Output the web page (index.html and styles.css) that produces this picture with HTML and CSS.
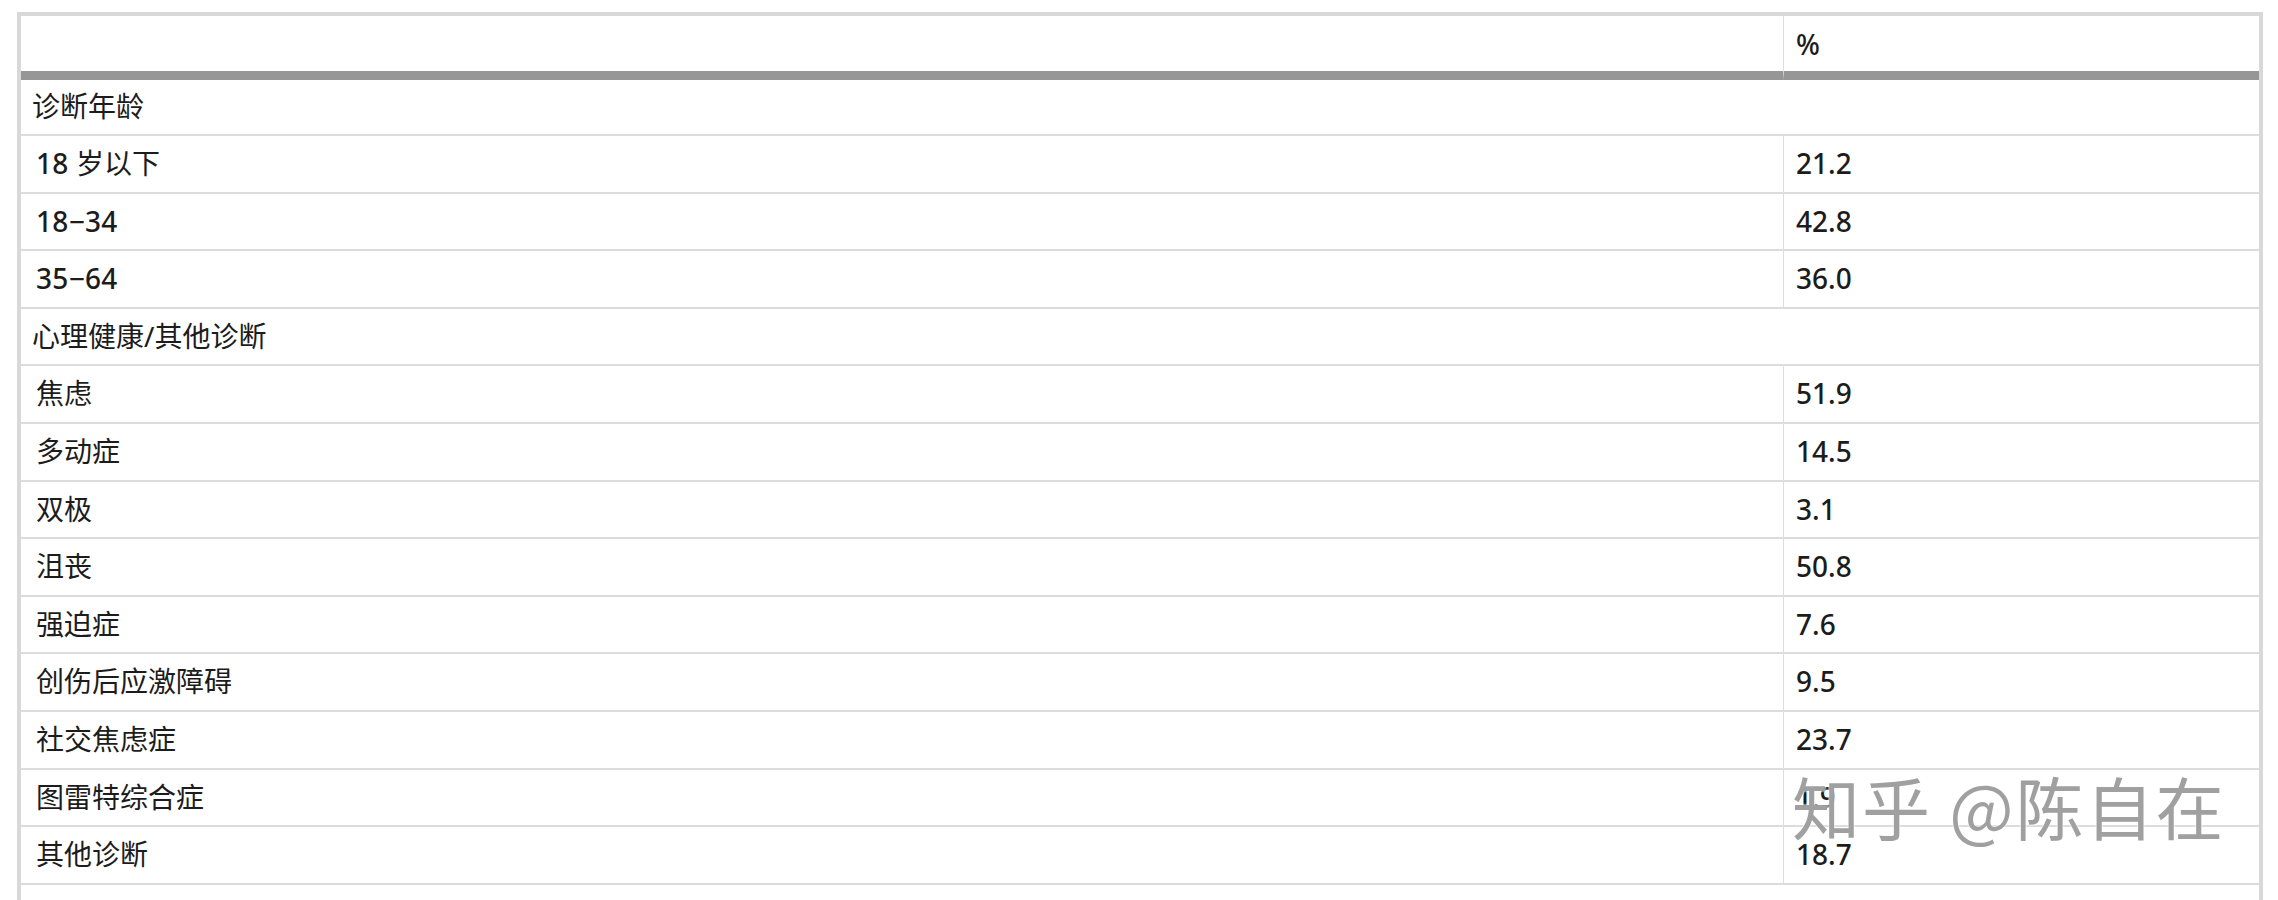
FILE: index.html
```html
<!DOCTYPE html>
<html lang="zh">
<head>
<meta charset="utf-8">
<title>诊断统计</title>
<link rel="stylesheet" href="styles.css">
</head>
<body>
<div class="page">
  <table class="tbl">
    <colgroup>
      <col class="c-label">
      <col class="c-val">
    </colgroup>
    <thead>
      <tr>
        <th class="h-label"></th>
        <th class="h-val">%</th>
      </tr>
    </thead>
    <tbody>
      <tr class="sec first"><td colspan="2">诊断年龄</td></tr>
      <tr><td class="lbl"><span class="num">18</span> 岁以下</td><td class="val">21.2</td></tr>
      <tr><td class="lbl"><span class="num">18−34</span></td><td class="val">42.8</td></tr>
      <tr><td class="lbl"><span class="num">35−64</span></td><td class="val">36.0</td></tr>
      <tr class="sec"><td colspan="2">心理健康/其他诊断</td></tr>
      <tr><td class="lbl">焦虑</td><td class="val">51.9</td></tr>
      <tr><td class="lbl">多动症</td><td class="val">14.5</td></tr>
      <tr><td class="lbl">双极</td><td class="val">3.1</td></tr>
      <tr><td class="lbl">沮丧</td><td class="val">50.8</td></tr>
      <tr><td class="lbl">强迫症</td><td class="val">7.6</td></tr>
      <tr><td class="lbl">创伤后应激障碍</td><td class="val">9.5</td></tr>
      <tr><td class="lbl">社交焦虑症</td><td class="val">23.7</td></tr>
      <tr><td class="lbl">图雷特综合症</td><td class="val">1.9</td></tr>
      <tr><td class="lbl">其他诊断</td><td class="val">18.7</td></tr>
      <tr class="foot"><td colspan="2"></td></tr>
    </tbody>
  </table>
  <div class="watermark">知乎 @陈自在</div>
</div>
</body>
</html>
```

FILE: styles.css
```css
html, body {
  margin: 0;
  padding: 0;
  background: #ffffff;
}

body {
  font-family: "Noto Sans", "Open Sans", "Noto Sans CJK SC", sans-serif;
  color: #1c1c1c;
}

.page {
  position: relative;
  padding: 12px 15px 0 17px;
}

.tbl {
  width: 2246px;
  border-collapse: separate;
  border-spacing: 0;
  border-top: 4px solid #d8d8d8;
  border-left: 4px solid #d8d8d8;
  border-right: 4px solid #d8d8d8;
  font-size: 28px;
  table-layout: fixed;
}

.c-label { width: 1762px; }
.c-val { width: 476px; }

.tbl th {
  box-sizing: border-box;
  height: 64px;
  padding: 0 12px;
  text-align: left;
  font-weight: 500;
  border-bottom: 9px solid #969696;
  vertical-align: middle;
}

.tbl th.h-val {
  border-left: 1px solid #dedede;
}

.tbl td {
  box-sizing: border-box;
  height: 57.6px;
  padding: 0 12px;
  border-top: 2px solid #dcdcdc;
  vertical-align: middle;
  line-height: 1.2;
  white-space: nowrap;
}

.tbl tr.first td {
  border-top: none;
  height: 54px;
}

.tbl td.lbl {
  padding-left: 15px;
}

.tbl td.val {
  border-left: 1px solid #dedede;
  font-weight: 500;
}

.num {
  font-weight: 500;
  letter-spacing: 0.3px;
}

.tbl tr.sec td {
  padding-left: 11px;
}

.tbl tr.foot td {
  height: 60px;
}

.watermark {
  position: absolute;
  left: 1792px;
  top: 772px;
  font-family: "Noto Sans CJK SC", sans-serif;
  font-size: 68px;
  line-height: 1;
  letter-spacing: 2px;
  color: rgba(128, 128, 128, 0.75);
  text-shadow: 0 0 2px #ffffff, 0 0 2px #ffffff;
  white-space: nowrap;
  pointer-events: none;
}
```
